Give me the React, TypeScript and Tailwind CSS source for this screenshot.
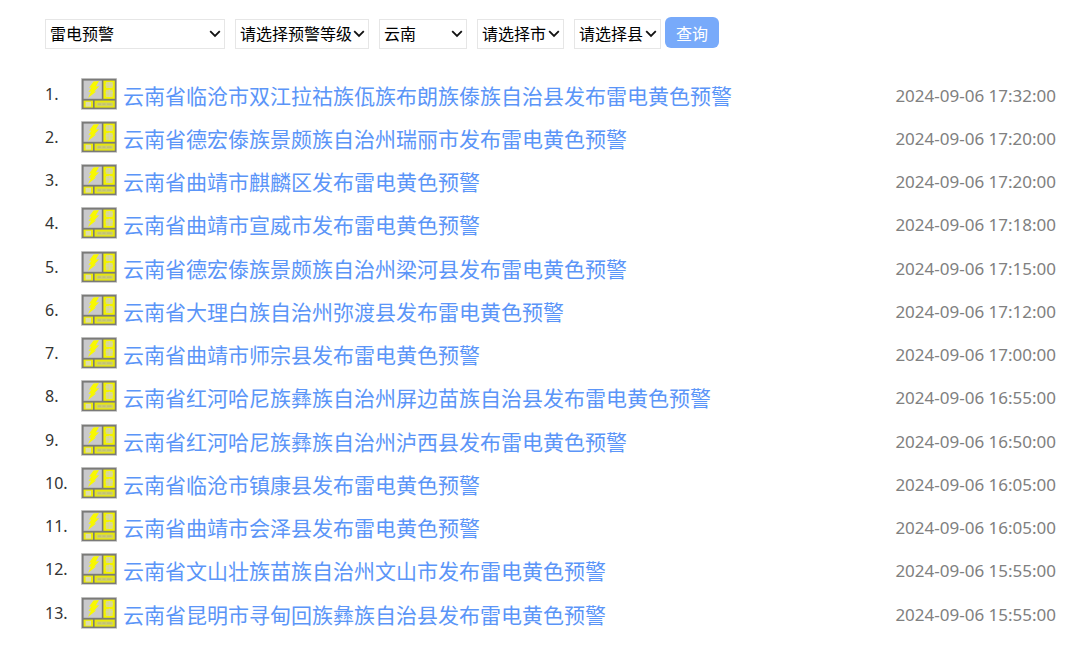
import { useState } from "react";
import clsx from "clsx";

interface Warning {
  title: string;
  time: string;
}

interface Filter {
  id: string;
  label: string;
  options: string[];
  className: string;
}

const filters: Filter[] = [
  {
    id: "type",
    label: "预警类型",
    options: ["雷电预警", "暴雨预警", "大风预警", "高温预警"],
    className: "w-[180px]",
  },
  {
    id: "level",
    label: "预警等级",
    options: ["请选择预警等级", "蓝色", "黄色", "橙色", "红色"],
    className: "w-[134px]",
  },
  { id: "province", label: "省", options: ["云南"], className: "w-[88px]" },
  { id: "city", label: "市", options: ["请选择市"], className: "w-[87px]" },
  { id: "county", label: "县", options: ["请选择县"], className: "w-[87px]" },
];

const warnings: Warning[] = [
  { title: "云南省临沧市双江拉祜族佤族布朗族傣族自治县发布雷电黄色预警", time: "2024-09-06 17:32:00" },
  { title: "云南省德宏傣族景颇族自治州瑞丽市发布雷电黄色预警", time: "2024-09-06 17:20:00" },
  { title: "云南省曲靖市麒麟区发布雷电黄色预警", time: "2024-09-06 17:20:00" },
  { title: "云南省曲靖市宣威市发布雷电黄色预警", time: "2024-09-06 17:18:00" },
  { title: "云南省德宏傣族景颇族自治州梁河县发布雷电黄色预警", time: "2024-09-06 17:15:00" },
  { title: "云南省大理白族自治州弥渡县发布雷电黄色预警", time: "2024-09-06 17:12:00" },
  { title: "云南省曲靖市师宗县发布雷电黄色预警", time: "2024-09-06 17:00:00" },
  { title: "云南省红河哈尼族彝族自治州屏边苗族自治县发布雷电黄色预警", time: "2024-09-06 16:55:00" },
  { title: "云南省红河哈尼族彝族自治州泸西县发布雷电黄色预警", time: "2024-09-06 16:50:00" },
  { title: "云南省临沧市镇康县发布雷电黄色预警", time: "2024-09-06 16:05:00" },
  { title: "云南省曲靖市会泽县发布雷电黄色预警", time: "2024-09-06 16:05:00" },
  { title: "云南省文山壮族苗族自治州文山市发布雷电黄色预警", time: "2024-09-06 15:55:00" },
  { title: "云南省昆明市寻甸回族彝族自治县发布雷电黄色预警", time: "2024-09-06 15:55:00" },
];

// Yellow lightning warning sign
function LightningSign() {
  return (
    <svg width="36" height="32" viewBox="0 0 36 32" className="shrink-0" aria-hidden="true">
      <rect width="36" height="32" fill="#d0d0d0" />
      <rect x="0.8" y="0.8" width="34.6" height="30.2" fill="#7a7a78" />
      <rect x="2.6" y="2.6" width="18.2" height="18.2" fill="#c9c9cb" />
      <rect x="22.4" y="2.6" width="11.4" height="18.2" fill="#f2f200" />
      <rect x="2.6" y="22.6" width="9.4" height="7" fill="#ecec08" />
      <rect x="13.6" y="22.6" width="20.2" height="7" fill="#e8e80c" />
      <path d="M12.5 3.4 18 3l-3.2 5.6 3.4-.4-5 5.2 2 .2L7 20l3-6.4-2.6.4 3-4.4-2.4.2z" fill="#f8f800" />
      <rect x="24.8" y="4" width="7" height="6" rx="1" fill="#dada86" />
      <rect x="24.8" y="12" width="7" height="7" rx="1" fill="#dada86" />
      <g fill="none" stroke="#d2d2b4" strokeWidth="1">
        <path d="M24.5 7h7.5M28.3 4v6" />
        <path d="M24.8 14.8h7M28.3 11.5V19" />
      </g>
      <rect x="4.6" y="23.8" width="5.4" height="4.8" fill="#dcdcb0" />
      <rect x="15.5" y="24.4" width="16.5" height="3.8" rx="1" fill="#cfcf6a" />
      <path d="M17 26.2h3M21.5 26.2h3M26 26.2h4.5" fill="none" stroke="#bcbc7c" strokeWidth="1.2" />
    </svg>
  );
}

function Chevron() {
  return (
    <svg
      width="12"
      height="8"
      viewBox="0 0 12 8"
      className="pointer-events-none absolute top-[11px] right-1"
      aria-hidden="true"
    >
      <path d="M1.2 1.2 6 6l4.8-4.8" fill="none" stroke="#111" strokeWidth="1.8" />
    </svg>
  );
}

export default function App() {
  const [values, setValues] = useState<Record<string, string>>({});

  return (
    <main className="min-h-screen bg-white pt-[17px] pr-6 pb-4 pl-[45px] font-['Noto_Sans','Noto_Sans_CJK_SC',sans-serif]">
      <form className="flex flex-wrap items-start" onSubmit={(e) => e.preventDefault()}>
        <div className="flex flex-wrap gap-[10px] pt-0.5">
          {filters.map((filter) => (
            <div key={filter.id} className={clsx("relative", filter.className)}>
              <select
                aria-label={filter.label}
                value={values[filter.id] ?? filter.options[0]}
                onChange={(e) => setValues({ ...values, [filter.id]: e.target.value })}
                className="block h-[30px] w-full appearance-none border border-[#e6e6e6] bg-white pb-0.5 pl-1 font-['Noto_Sans_CJK_SC',sans-serif] text-[16px] leading-6 text-black"
              >
                {filter.options.map((option) => (
                  <option key={option}>{option}</option>
                ))}
              </select>
              <Chevron />
            </div>
          ))}
        </div>
        <button
          type="submit"
          className="ml-1 h-[31px] rounded-md bg-[#78aafa] px-[11px] font-['Noto_Sans_CJK_SC',sans-serif] text-[16px] leading-6 text-white"
        >
          查询
        </button>
      </form>

      <ol className="mt-[23px]">
        {warnings.map((warning, index) => (
          <li key={index} className="flex h-[43px] items-center nth-[4n]:h-11">
            <span className="w-9 shrink-0 text-[16px] leading-6 text-[#333]">{index + 1}.</span>
            <a href="#" className="flex min-w-0 items-center gap-[6px] text-[21px] leading-8 text-[#5b95f8]">
              <LightningSign />
              <span className="truncate pt-1">{warning.title}</span>
            </a>
            <time className="ml-auto shrink-0 pt-1 pl-4 text-[17px] leading-6 text-[#808080]">{warning.time}</time>
          </li>
        ))}
      </ol>
    </main>
  );
}
